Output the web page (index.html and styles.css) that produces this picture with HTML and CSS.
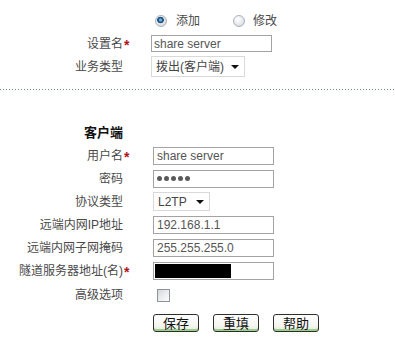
FILE: index.html
```html
<!DOCTYPE html>
<html lang="zh-CN">
<head>
<meta charset="utf-8">
<link rel="stylesheet" href="styles.css">
</head>
<body>
<div class="page">
  <div class="form form-top">
    <div class="label"></div>
    <div class="ctrl radios">
      <span class="radio checked"></span><span class="radio-text">添加</span>
      <span class="radio second"></span><span class="radio-text">修改</span>
    </div>

    <div class="label">设置名<span class="req">*</span></div>
    <div class="ctrl"><div class="input input-top">share server</div></div>

    <div class="label">业务类型</div>
    <div class="ctrl"><div class="select select-top"><span>拨出(客户端)</span><span class="arrow"></span></div></div>
  </div>

  <div class="divider"></div>

  <div class="form form-bottom">
    <div class="label heading">客户端</div>
    <div class="ctrl"></div>

    <div class="label">用户名<span class="req">*</span></div>
    <div class="ctrl"><div class="input">share server</div></div>

    <div class="label">密码</div>
    <div class="ctrl"><div class="input dots"><i></i><i></i><i></i><i></i><i></i></div></div>

    <div class="label">协议类型</div>
    <div class="ctrl"><div class="select select-small"><span>L2TP</span><span class="arrow"></span></div></div>

    <div class="label">远端内网IP地址</div>
    <div class="ctrl"><div class="input">192.168.1.1</div></div>

    <div class="label">远端内网子网掩码</div>
    <div class="ctrl"><div class="input">255.255.255.0</div></div>

    <div class="label">隧道服务器地址(名)<span class="req">*</span></div>
    <div class="ctrl"><div class="input redacted"><span class="blackout"></span></div></div>

    <div class="label row-check">高级选项</div>
    <div class="ctrl row-check"><span class="checkbox"></span></div>

    <div class="label row-btn"></div>
    <div class="ctrl row-btn buttons">
      <button class="btn" type="button">保存</button>
      <button class="btn" type="button">重填</button>
      <button class="btn" type="button">帮助</button>
    </div>
  </div>
</div>
</body>
</html>
```

FILE: styles.css
```css
html, body {
  margin: 0;
  padding: 0;
  background: #ffffff;
}

body {
  font-family: "Liberation Sans", "Noto Sans CJK SC", sans-serif;
  font-size: 12px;
  color: #4a4a4a;
}

.page {
  width: 395px;
  height: 345px;
  overflow: hidden;
}

.form {
  display: grid;
  grid-template-columns: 123px 1fr;
  grid-auto-rows: 23px;
}

.form-top {
  padding-top: 9px;
  column-gap: 28px;
}

.form-bottom {
  margin-top: 31px;
  column-gap: 30px;
}

.label {
  display: flex;
  align-items: center;
  justify-content: flex-end;
  white-space: nowrap;
  line-height: 1;
}

.heading {
  font-weight: bold;
  font-size: 13px;
  color: #111;
}

.req {
  display: inline-block;
  width: 7px;
  margin-right: -7px;
  padding-left: 1px;
  box-sizing: border-box;
  color: #b0141c;
  font-weight: bold;
  font-size: 14px;
  line-height: 1;
  position: relative;
  top: 1px;
}

.ctrl {
  display: flex;
  align-items: center;
}

.radios {
  padding-left: 4px;
}

.radio {
  width: 12px;
  height: 12px;
  border-radius: 50%;
  box-sizing: border-box;
  border: 1px solid #a9b3bc;
  background: radial-gradient(circle at 40% 35%, #ffffff 0%, #eef0f2 40%, #c9ced3 100%);
  margin-right: 9px;
  flex: none;
}

.radio.checked {
  background:
    radial-gradient(circle at 45% 40%, #7fb0d6 0 1px, #1d5f92 2px, #164a74 3px, transparent 3.6px),
    radial-gradient(circle at 40% 35%, #ffffff 0%, #e6e9ec 50%, #c2c8ce 100%);
}

.radio.second {
  margin-left: 33px;
  margin-right: 8px;
}

.radio-text {
  line-height: 1;
}

.input {
  box-sizing: border-box;
  height: 18px;
  width: 121px;
  border: 1px solid #a3a3a3;
  padding: 0 3px;
  display: flex;
  align-items: center;
  color: #555;
  font-size: 12px;
  line-height: 1;
  white-space: nowrap;
  background: #fff;
}

.input-top {
  height: 17px;
  padding-left: 2px;
}

.dots {
  gap: 2px;
  padding-left: 3px;
}

.dots i {
  display: block;
  width: 5px;
  height: 5px;
  border-radius: 50%;
  background: #5a5a5a;
}

.redacted {
  padding: 1px 1px;
  align-items: stretch;
}

.blackout {
  display: block;
  width: 76px;
  background: #000;
}

.select {
  box-sizing: border-box;
  border: 1px solid #d9d9d9;
  background: #fff;
  display: flex;
  align-items: center;
  justify-content: space-between;
  padding: 0 5px 0 4px;
  color: #444;
  white-space: nowrap;
  line-height: 1;
}

.select-top {
  width: 94px;
  height: 21px;
}

.select-small {
  width: 57px;
  height: 19px;
  padding-left: 4px;
}

.arrow {
  width: 0;
  height: 0;
  border-left: 4px solid transparent;
  border-right: 4px solid transparent;
  border-top: 4px solid #111;
  margin-top: 1px;
}

.divider {
  margin-top: 11px;
  height: 1px;
  background-image: linear-gradient(to right, #6f8f80 0 1px, transparent 1px 3px);
  background-size: 3px 1px;
  background-repeat: repeat-x;
}

.form-bottom .row-check {
  height: 25px;
}

.checkbox {
  width: 13px;
  height: 13px;
  box-sizing: border-box;
  border: 1px solid #8f9499;
  background: linear-gradient(135deg, #d5d8dc 0%, #eceef0 55%, #fbfbfb 100%);
  margin-left: 4px;
  margin-top: 1px;
}

.buttons {
  align-items: flex-start;
  padding-top: 9px;
  gap: 14px;
  height: 40px;
}

.form-bottom .row-btn {
  height: 40px;
}

.btn {
  width: 46px;
  height: 18px;
  box-sizing: border-box;
  margin: 0;
  padding: 0;
  border: 1px solid #2e2e2e;
  border-radius: 3px;
  background: linear-gradient(to bottom, #ffffff 0%, #f4f4f0 70%, #e8e8e2 100%);
  box-shadow: inset 0 -2px 0 #9bd08a;
  font-family: "Noto Sans CJK SC", sans-serif;
  font-size: 13px;
  line-height: 14px;
  color: #111;
}
```
